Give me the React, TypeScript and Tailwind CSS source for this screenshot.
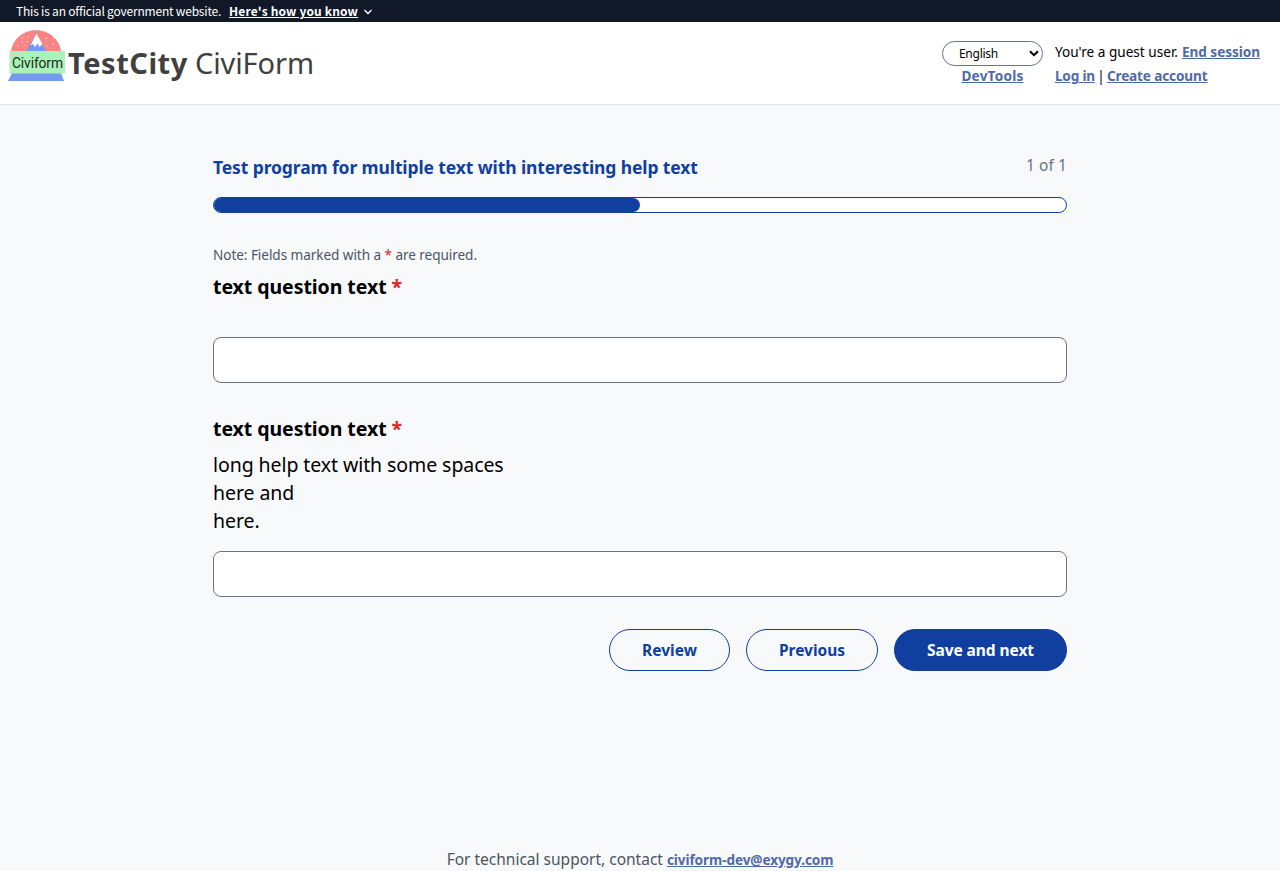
import React from "react";

function Logo() {
  return (
    <svg width="60" height="52" viewBox="0 0 60 52" className="shrink-0">
      <path d="M3 22C4 10 14 0.2 28 0.200S52 10 53 22Z" fill="#fa8383" />
      <path d="M28.500 4L38.500 22H17.500Z" fill="#7599f0" />
      <path d="M28.500 3.500L34.500 14L31.500 17L29.500 13.500L27 17L25 14L22.500 15.500Z" fill="#fff" />
      <g fill="#fff" fillOpacity="0.8">
        <circle cx="20" cy="7" r="0.7" /><circle cx="14" cy="8" r="0.7" /><circle cx="19" cy="12" r="0.7" />
        <circle cx="9.500" cy="16" r="0.7" /><circle cx="17" cy="15.500" r="0.7" /><circle cx="38" cy="8" r="0.7" />
        <circle cx="46" cy="8" r="0.7" /><circle cx="14" cy="12" r="0.7" /><circle cx="45" cy="14" r="0.7" />
        <circle cx="39" cy="16" r="0.7" />
      </g>
      <path d="M4 43H53L56 51H0Z" fill="#7599f0" />
      <rect x="1.500" y="21" width="55.500" height="22.500" fill="#aaf2b9" />
      <text x="4" y="38" fontFamily="Roboto, sans-serif" fontSize="13.8" textLength="51" fill="#1c2b20">Civiform</text>
    </svg>
  );
}

const link = "font-bold text-[#5069a8] underline underline-offset-1";
const outlineButton = "h-[42px] rounded-full border border-[#113f9f] text-center leading-10 text-[#113f9f]";

function Question({ help }: { help?: string[] }) {
  return (
    <div>
      <div className="flex h-7 gap-[5px] text-[19.500px] leading-7 font-bold tracking-[-0.06px] text-black">
        <span>text question text</span>
        <span className="text-[#dc2626]">*</span>
      </div>
      <div className={help ? "mt-2 mb-4 text-[19.500px] leading-7 tracking-[-0.08px] text-black" : "h-9"}>
        {help?.map((line) => <div key={line}>{line}</div>)}
      </div>
      <input className="block h-[46px] w-full rounded-lg border border-[#6b7280] bg-white px-3" />
    </div>
  );
}

export default function App() {
  return (
    <div className="flex h-[871px] flex-col overflow-hidden bg-[#f8f9fb] font-['Noto_Sans',sans-serif]">
      <div className="flex h-[22px] shrink-0 items-center bg-[#111827] px-4 font-['Noto_Sans_CJK_SC',sans-serif] text-xs text-white">
        <span className="tracking-[-0.2px]">This is an official government website.</span>
        <button className="ml-2 flex items-center gap-[6px] font-bold">
          <span className="tracking-[0.16px] underline underline-offset-1">Here's how you know</span>
          <svg width="8" height="6" viewBox="0 0 8 6" fill="none" stroke="currentColor" strokeWidth="1.3" className="mt-px"><path d="M0.500 1L4 4.500L7.500 1" /></svg>
        </button>
      </div>
      <header className="flex h-[83px] shrink-0 border-b border-[#e5e7eb] bg-white pl-2">
        <div className="pt-2"><Logo /></div>
        <div className="flex items-baseline pt-[18px] text-[29px] leading-[46px] text-[#404040]">
          <span className="w-[119px] font-bold tracking-[0.52px]">TestCity</span>
          <span className="ml-[8px] tracking-[-0.1px]">CiviForm</span>
        </div>
        <div className="ml-auto flex gap-3 pt-[19px] pr-5 text-[13.600px]">
          <div className="flex w-[101px] flex-col items-center">
            <div className="flex h-[25px] w-full items-center justify-between rounded-full border border-[#6b7280] pr-[3px] pl-4 text-xs tracking-[-0.26px] text-black">
              <span>English</span>
              <svg width="10" height="7" viewBox="0 0 10 7" fill="none" stroke="currentColor" strokeWidth="2"><path d="M1 1.200L5 5.200L9 1.200" /></svg>
            </div>
            <a className={`${link} tracking-[0.21px]`}>DevTools</a>
          </div>
          <div className="-mt-px flex flex-col leading-6 text-black">
            <div className="flex justify-between gap-[4px]">
              <span>You're a guest user.</span>
              <a className={`${link} tracking-[-0.05px]`}>End session</a>
            </div>
            <div className="flex">
              <a className={`${link} tracking-[-0.19px]`}>Log in</a>
              <span className="w-3 text-center">|</span>
              <a className={`${link} tracking-[-0.15px]`}>Create account</a>
            </div>
          </div>
        </div>
      </header>
      <main className="mx-auto w-[854px] shrink-0 pt-[48px]">
        <div className="flex h-11 justify-between">
          <h1 className="text-[17.500px] leading-7 font-bold tracking-[-0.11px] text-[#113f9f]">Test program for multiple text with interesting help text</h1>
          <span className="text-[15.500px] leading-6 tracking-[0.08px] text-[#6b7280]">1 of 1</span>
        </div>
        <div className="h-4 rounded-full border border-[#113f9f] bg-white">
          <div className="h-full w-1/2 rounded-full bg-[#113f9f]" />
        </div>
        <p className="mt-8 h-5 text-[13.600px] leading-5 tracking-[-0.07px] text-[#4b5563]">
          Note: Fields marked with a <span className="text-[#dc2626]">*</span> are required.
        </p>
        <div className="mt-2"><Question /></div>
        <div className="mt-8"><Question help={["long help text with some spaces", "here and", "here."]} /></div>
        <div className="mt-8 flex justify-end gap-4 text-[15.500px] font-bold">
          <button className={`${outlineButton} w-[121px]`}>Review</button>
          <button className={`${outlineButton} w-[132px]`}>Previous</button>
          <button className="h-[42px] w-[173px] rounded-full border border-[#113f9f] bg-[#113f9f] text-center leading-10 tracking-[-0.07px] text-white">Save and next</button>
        </div>
      </main>
      <footer className="mt-[176px] flex shrink-0 items-baseline justify-center gap-[4px] text-[15.500px] leading-6 text-[#4b5563]">
        <span>For technical support, contact</span>
        <a className={`${link} text-[13.600px] tracking-[-0.1px]`}>civiform-dev@exygy.com</a>
      </footer>
    </div>
  );
}
